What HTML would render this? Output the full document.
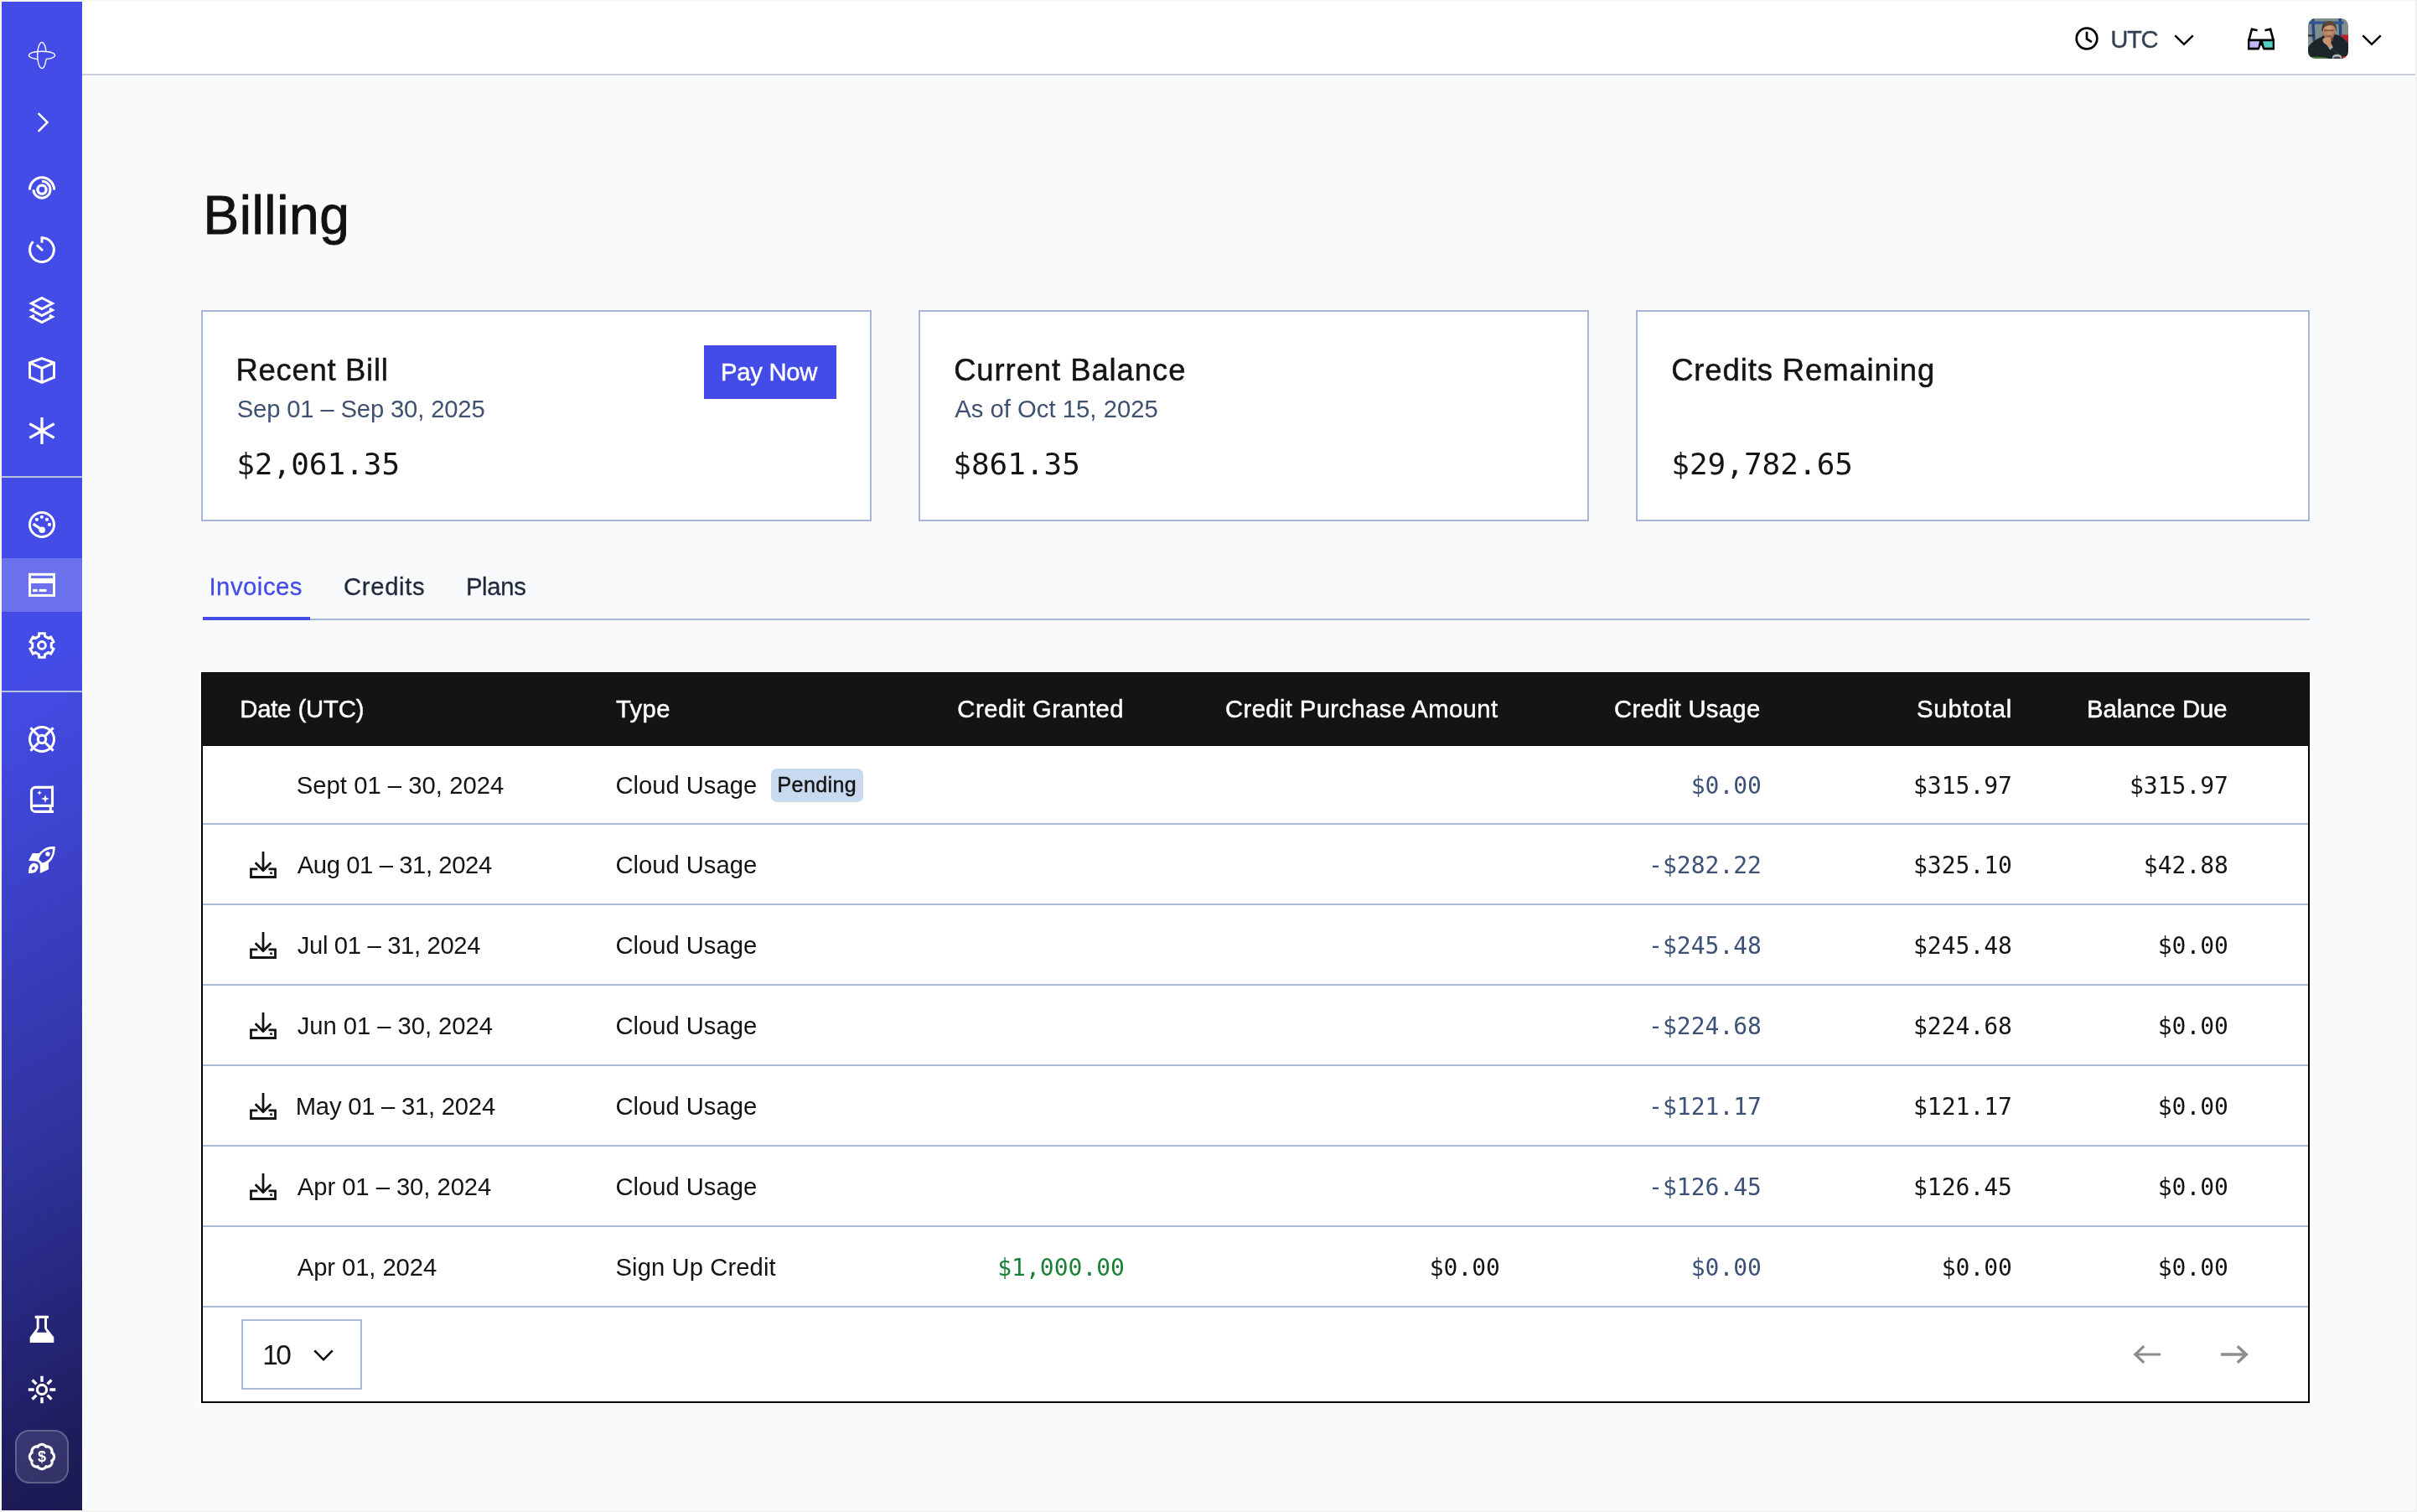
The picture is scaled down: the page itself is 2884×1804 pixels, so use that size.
<!DOCTYPE html>
<html lang="en"><head><meta charset="utf-8"><title>Billing</title>
<style>
*{box-sizing:border-box;margin:0;padding:0}
html,body{width:2884px;height:1804px;overflow:hidden;background:#f2f2f2}
body{position:relative;font-family:"Liberation Sans", sans-serif;-webkit-font-smoothing:antialiased}
#root{position:absolute;left:0;top:0;width:2884px;height:1804px;overflow:hidden;will-change:transform}
#app{position:absolute;left:2px;top:2px;width:2880px;height:1800px;background:#f8fafc}
.abs,.t,.ic{position:absolute}
.t{white-space:nowrap;line-height:1;display:block;font-weight:400}
.s{font-family:"Liberation Sans", sans-serif}
.m{font-family:"DejaVu Sans Mono", "Liberation Mono", monospace}
.ic{display:block}
nav{position:absolute;left:2px;top:2px;width:96px;height:1800px;background:linear-gradient(150deg,#444ce7 0%,#444ce7 44%,#3c41c8 58%,#3134a0 74%,#25267a 86%,#1d1c58 96%,#1b1a52 100%)}
nav .div{position:absolute;left:0;width:96px;height:2px;background:#b4c3dc}
nav .act{position:absolute;left:0;top:664px;width:96px;height:64px;background:rgba(255,255,255,.21)}
nav .bill{position:absolute;left:16px;top:1704px;width:64px;height:64px;border-radius:17px;background:rgba(255,255,255,.11);border:2px solid rgba(255,255,255,.22)}
.hbar{position:absolute;left:98px;top:2px;width:2784px;height:88px;background:#fff;border-bottom:2px solid #cbd0da}
.card{position:absolute;top:370px;height:252px;background:#fff;border:2px solid #a6b8d6}
.btn{position:absolute;left:840px;top:412px;width:158px;height:64px;background:#444ce7}
.tabline{position:absolute;left:242px;top:738px;width:2514px;height:2px;background:#a6b8d6}
.tabact{position:absolute;left:242px;top:736px;width:128px;height:4px;background:#444ce7}
.tbl{position:absolute;left:240px;top:802px;width:2516px;height:872px;background:#fff;border:2px solid #000;box-shadow:0 0 0 1px #fff}
.thead{position:absolute;left:241px;top:802px;width:2514px;height:88px;background:#141414;border-top:1px solid #000;border-bottom:1px solid #000}
.rl{position:absolute;left:242px;width:2512px;height:2px;background:#a6b8d6}
.badge{position:absolute;left:920px;top:917px;width:110px;height:40px;border-radius:7px;background:#c9d9f0}
.sel{position:absolute;left:288px;top:1574px;width:144px;height:84px;border:2px solid #a6b8d6;background:#fff}
</style></head>
<body>
<div id="root">
<div class="abs" style="left:1px;top:1px;width:2881px;height:1px;background:#fdfdf1"></div>
<div class="abs" style="left:1px;top:1px;width:1px;height:1801px;background:#fdfdf1"></div>
<div id="app"></div>
<nav aria-label="Primary">
<div class="act"></div>
<div class="div" style="top:566px"></div>
<div class="div" style="top:822px"></div>
<div class="bill"></div>
<svg class="ic" style="left:32px;top:48px" width="32" height="32" viewBox="0 0 32 32" overflow="visible"><path d="M20.9 20.45A15.6 4.7 0 1 0 11.1 20.45" fill="none" stroke="#fff" stroke-width="1.4"/><path d="M20.9 11.2A5.2 15.5 0 1 0 20.9 20.8" fill="none" stroke="#fff" stroke-width="1.4"/></svg>
<svg class="ic" style="left:32px;top:128px" width="32" height="32" viewBox="0 0 32 32" overflow="visible"><path d="M11.65 5.05 22.6 16 11.65 26.95" fill="none" stroke="#fff" stroke-width="2.5"/></svg>
<svg class="ic" style="left:32px;top:208px" width="32" height="32" viewBox="0 0 32 32" overflow="visible"><path d="M1.4 16.4A14.6 14.6 0 0 1 30.6 16.4" fill="none" stroke="#fff" stroke-width="3"/><path d="M16 6.2A10 10 0 1 1 6 16.2" fill="none" stroke="#fff" stroke-width="3"/><circle cx="16" cy="16.2" r="5.1" fill="none" stroke="#fff" stroke-width="3.3"/></svg>
<svg class="ic" style="left:32px;top:280px" width="32" height="32" viewBox="0 0 32 32" overflow="visible"><path d="M16 1.7A14.4 14.4 0 1 1 5.5 6.2" fill="none" stroke="#fff" stroke-width="3"/><path d="M16 0.3V7.7" fill="none" stroke="#fff" stroke-width="3"/><path d="M9.9 10.3 17 17" fill="none" stroke="#fff" stroke-width="3"/></svg>
<svg class="ic" style="left:32px;top:352px" width="32" height="32" viewBox="0 0 32 32" overflow="visible"><path d="M16 1.5 28.5 8 16 14.5 3.5 8Z" fill="none" stroke="#fff" stroke-width="3"/><path d="M7 14.2 3.5 16 16 22.5 28.5 16 25 14.2" fill="none" stroke="#fff" stroke-width="3"/><path d="M7 22.2 3.5 24 16 30.5 28.5 24 25 22.2" fill="none" stroke="#fff" stroke-width="3"/></svg>
<svg class="ic" style="left:32px;top:424px" width="32" height="32" viewBox="0 0 32 32" overflow="visible"><path d="M16 1.6 30.5 6.8V24.2L16 30.4 1.5 24.2V6.8Z" fill="none" stroke="#fff" stroke-width="3"/><path d="M1.5 6.8 16 13.4 30.5 6.8M16 13.4V30.4" fill="none" stroke="#fff" stroke-width="3"/></svg>
<svg class="ic" style="left:32px;top:496px" width="32" height="32" viewBox="0 0 32 32" overflow="visible"><path d="M16 0V32" fill="none" stroke="#fff" stroke-width="3.3"/><path d="M1.3 7.6 30.7 24.4M1.3 24.4 30.7 7.6" fill="none" stroke="#fff" stroke-width="3.3"/></svg>
<svg class="ic" style="left:32px;top:608px" width="32" height="32" viewBox="0 0 32 32" overflow="visible"><circle cx="16" cy="16" r="14.5" fill="none" stroke="#fff" stroke-width="3"/><circle cx="9.9" cy="9.8" r="2.1" fill="#fff"/><circle cx="15.9" cy="6.8" r="2.1" fill="#fff"/><circle cx="22" cy="9.8" r="2.1" fill="#fff"/><circle cx="25" cy="15.9" r="2.1" fill="#fff"/><path d="M5.6 15.1 16 22" fill="none" stroke="#fff" stroke-width="3.2"/><circle cx="16.2" cy="22.2" r="3.8" fill="#fff"/></svg>
<svg class="ic" style="left:32px;top:680px" width="32" height="32" viewBox="0 0 32 32" overflow="visible"><rect x="1.5" y="3.3" width="29" height="25.2" fill="none" stroke="#fff" stroke-width="3"/><rect x="1.5" y="8" width="29" height="6" fill="#fff"/><rect x="5.2" y="20.9" width="5.4" height="3.1" fill="#fff"/><rect x="12.6" y="20.9" width="8.9" height="3.1" fill="#fff"/></svg>
<svg class="ic" style="left:32px;top:752px" width="32" height="32" viewBox="0 0 32 32" overflow="visible"><path d="M19.55 5.06 19.28 1.77 12.72 1.77 12.45 5.06 8.30 7.45 5.32 6.04 2.04 11.73 4.75 13.61 4.75 18.39 2.04 20.27 5.32 25.96 8.30 24.55 12.45 26.94 12.72 30.23 19.28 30.23 19.55 26.94 23.70 24.55 26.68 25.96 29.96 20.27 27.25 18.39 27.25 13.61 29.96 11.73 26.68 6.04 23.70 7.45Z" fill="none" stroke="#fff" stroke-width="3" stroke-linejoin="miter"/><circle cx="16" cy="15.9" r="4.45" fill="none" stroke="#fff" stroke-width="2.9"/></svg>
<svg class="ic" style="left:32px;top:864px" width="32" height="32" viewBox="0 0 32 32" overflow="visible"><circle cx="16" cy="16" r="14.5" fill="none" stroke="#fff" stroke-width="3"/><circle cx="16" cy="16" r="4.7" fill="none" stroke="#fff" stroke-width="3.1"/><path d="M20.38 20.38 29.58 29.58M11.62 20.38 2.42 29.58M11.62 11.62 2.42 2.42M20.38 11.62 29.58 2.42" fill="none" stroke="#fff" stroke-width="3"/></svg>
<svg class="ic" style="left:32px;top:936px" width="32" height="32" viewBox="0 0 32 32" overflow="visible"><path d="M30 1.4H8.2A4.7 4.7 0 0 0 3.5 6.1V25.7A4.7 4.7 0 0 0 8.2 30.4H30" fill="none" stroke="#fff" stroke-width="3.1"/><path d="M28.5 -0.2V25M3.5 23.4H30M26.3 24V30" fill="none" stroke="#fff" stroke-width="3.1"/><path d="M13.10 5.00 13.96 7.04 16.00 7.90 13.96 8.76 13.10 10.80 12.24 8.76 10.20 7.90 12.24 7.04Z" fill="#fff"/><path d="M20.00 10.20 21.25 13.85 24.90 15.10 21.25 16.35 20.00 20.00 18.75 16.35 15.10 15.10 18.75 13.85Z" fill="#fff"/></svg>
<svg class="ic" style="left:32px;top:1008px" width="32" height="32" viewBox="0 0 32 32" overflow="visible"><path d="M31.8 -0.1C28 -0.2 24 0.2 21 1.5 18 3 15 5.5 12.6 8L4.75 8 0.1 17 8.5 17.4C11 17.6 13 19.5 13.8 21.7L13.8 31.9 24 27.2 24 19.4C28 16.5 31.9 10 31.8 -0.1ZM28.8 3.1C25 3.2 20 4.8 17 7.3 15 9 13.2 12.5 12.4 15.4L16.6 19.6C20 18.6 23.5 16.5 25.6 14 27.8 11.2 29 7.5 28.8 3.1Z" fill="#fff" fill-rule="evenodd"/><circle cx="23" cy="8.9" r="2.7" fill="#fff"/><path d="M-0.1 31.9 0.6 25.5C1.4 22.2 3.8 20.2 6.4 19.8 9 20 11 21.4 11.6 23 11.8 26 10.6 28.6 8.5 30.2 7 31.3 5 31.8 -0.1 31.9ZM3.8 27.7C3.8 26.3 4.1 25.4 4.5 24.9 5.2 24.2 6 24 6.6 24 7.4 24.5 7.8 25.2 7.8 25.8 7.6 26.8 7 27.4 6.4 27.7Z" fill="#fff" fill-rule="evenodd"/></svg>
<svg class="ic" style="left:32px;top:1568px" width="32" height="32" viewBox="0 0 32 32" overflow="visible"><path d="M7.7 -0.2H24V3H22V14.7L30.3 25.6V32H1.7V25.6L9.7 14.7V3H7.7ZM12.6 3H19V14.7L22 19.7H9.7L12.6 14.7Z" fill="#fff" fill-rule="evenodd"/></svg>
<svg class="ic" style="left:32px;top:1640px" width="32" height="32" viewBox="0 0 32 32" overflow="visible"><circle cx="16" cy="16" r="5.6" fill="none" stroke="#fff" stroke-width="3.2"/><path d="M25.30 16.00 32.20 16.00M22.58 22.58 27.46 27.46M16.00 25.30 16.00 32.20M9.42 22.58 4.54 27.46M6.70 16.00 -0.20 16.00M9.42 9.42 4.54 4.54M16.00 6.70 16.00 -0.20M22.58 9.42 27.46 4.54" fill="none" stroke="#fff" stroke-width="3.4"/></svg>
<svg class="ic" style="left:32px;top:1720px" width="32" height="32" viewBox="0 0 32 32" overflow="visible"><path d="M30.60 16.00 30.59 16.38 30.55 16.76 30.49 17.14 30.40 17.51 30.29 17.88 30.16 18.24 30.00 18.60 29.83 18.94 29.62 19.27 29.40 19.59 29.15 19.89 28.87 20.18 28.57 20.45 28.22 20.69 27.73 20.86 27.96 21.32 28.03 21.74 28.06 22.14 28.05 22.54 28.01 22.93 27.95 23.32 27.85 23.70 27.74 24.07 27.60 24.43 27.44 24.78 27.26 25.11 27.05 25.44 26.83 25.75 26.59 26.04 26.32 26.32 26.04 26.59 25.75 26.83 25.44 27.05 25.11 27.26 24.78 27.44 24.43 27.60 24.07 27.74 23.70 27.85 23.32 27.95 22.93 28.01 22.54 28.05 22.14 28.06 21.74 28.03 21.32 27.96 20.86 27.73 20.69 28.22 20.45 28.57 20.18 28.87 19.89 29.15 19.59 29.40 19.27 29.62 18.94 29.83 18.60 30.00 18.24 30.16 17.88 30.29 17.51 30.40 17.14 30.49 16.76 30.55 16.38 30.59 16.00 30.60 15.62 30.59 15.24 30.55 14.86 30.49 14.49 30.40 14.12 30.29 13.76 30.16 13.40 30.00 13.06 29.83 12.73 29.62 12.41 29.40 12.11 29.15 11.82 28.87 11.55 28.57 11.31 28.22 11.14 27.73 10.68 27.96 10.26 28.03 9.86 28.06 9.46 28.05 9.07 28.01 8.68 27.95 8.30 27.85 7.93 27.74 7.57 27.60 7.22 27.44 6.89 27.26 6.56 27.05 6.25 26.83 5.96 26.59 5.68 26.32 5.41 26.04 5.17 25.75 4.95 25.44 4.74 25.11 4.56 24.78 4.40 24.43 4.26 24.07 4.15 23.70 4.05 23.32 3.99 22.93 3.95 22.54 3.94 22.14 3.97 21.74 4.04 21.32 4.27 20.86 3.78 20.69 3.43 20.45 3.13 20.18 2.85 19.89 2.60 19.59 2.38 19.27 2.17 18.94 2.00 18.60 1.84 18.24 1.71 17.88 1.60 17.51 1.51 17.14 1.45 16.76 1.41 16.38 1.40 16.00 1.41 15.62 1.45 15.24 1.51 14.86 1.60 14.49 1.71 14.12 1.84 13.76 2.00 13.40 2.17 13.06 2.38 12.73 2.60 12.41 2.85 12.11 3.13 11.82 3.43 11.55 3.78 11.31 4.27 11.14 4.04 10.68 3.97 10.26 3.94 9.86 3.95 9.46 3.99 9.07 4.05 8.68 4.15 8.30 4.26 7.93 4.40 7.57 4.56 7.22 4.74 6.89 4.95 6.56 5.17 6.25 5.41 5.96 5.68 5.68 5.96 5.41 6.25 5.17 6.56 4.95 6.89 4.74 7.22 4.56 7.57 4.40 7.93 4.26 8.30 4.15 8.68 4.05 9.07 3.99 9.46 3.95 9.86 3.94 10.26 3.97 10.68 4.04 11.14 4.27 11.31 3.78 11.55 3.43 11.82 3.13 12.11 2.85 12.41 2.60 12.73 2.38 13.06 2.17 13.40 2.00 13.76 1.84 14.12 1.71 14.49 1.60 14.86 1.51 15.24 1.45 15.62 1.41 16.00 1.40 16.38 1.41 16.76 1.45 17.14 1.51 17.51 1.60 17.88 1.71 18.24 1.84 18.60 2.00 18.94 2.17 19.27 2.38 19.59 2.60 19.89 2.85 20.18 3.13 20.45 3.43 20.69 3.78 20.86 4.27 21.32 4.04 21.74 3.97 22.14 3.94 22.54 3.95 22.93 3.99 23.32 4.05 23.70 4.15 24.07 4.26 24.43 4.40 24.78 4.56 25.11 4.74 25.44 4.95 25.75 5.17 26.04 5.41 26.32 5.68 26.59 5.96 26.83 6.25 27.05 6.56 27.26 6.89 27.44 7.22 27.60 7.57 27.74 7.93 27.85 8.30 27.95 8.68 28.01 9.07 28.05 9.46 28.06 9.86 28.03 10.26 27.96 10.68 27.73 11.14 28.22 11.31 28.57 11.55 28.87 11.82 29.15 12.11 29.40 12.41 29.62 12.73 29.83 13.06 30.00 13.40 30.16 13.76 30.29 14.12 30.40 14.49 30.49 14.86 30.55 15.24 30.59 15.62Z" fill="none" stroke="#fff" stroke-width="3.2" stroke-linejoin="round"/><text x="16" y="22.4" text-anchor="middle" font-family="Liberation Sans, sans-serif" font-weight="700" font-size="18" fill="#fff">$</text></svg>

</nav>
<div class="abs" style="left:98px;top:2px;width:1px;height:1800px;background:#fff"></div>
<header>
<div class="hbar"></div>
<svg class="ic" style="left:2474px;top:30px" width="32" height="32" viewBox="0 0 32 32" ><circle cx="16" cy="16" r="12.3" fill="none" stroke="#000" stroke-width="2.7"/><path d="M16 7.7V16.5L21.9 20.1" fill="none" stroke="#000" stroke-width="2.7"/></svg>
<span class="t s" id="utc" style="left:2518.13px;top:33.22px;font-size:29.26px;color:#334155;letter-spacing:-1.250px;-webkit-text-stroke:0.3px #334155;">UTC</span>
<svg class="ic" style="left:2594px;top:41px" width="24" height="14" viewBox="0 0 24 14" overflow="visible"><path d="M1.3 1.3 12 11.8 22.7 1.3" fill="none" stroke="#000" stroke-width="2.5"/></svg>
<svg class="ic" style="left:2682px;top:33px" width="32" height="28" viewBox="0 0 32 28" overflow="visible"><path d="M1.5 14.6 4.9 1.8 11.6 3.3M30.5 14.6 27.1 1.8 20.4 3.3" fill="none" stroke="#000" stroke-width="2.6"/><path d="M1.2 14.6H30.8V25.3H19.4L16 17.2 12.6 25.3H1.2Z" fill="#000" stroke="#000" stroke-width="2.4"/><path d="M2.4 16.3H14L12.3 23.75H2.4Z" fill="#c4b5fd"/><path d="M18.1 16.3H29.7V23.75H20Z" fill="#4fd1c5"/></svg>
<svg class="ic" style="left:2754px;top:22px" width="48" height="48" viewBox="0 0 48 48" role="img" aria-label="User avatar"><defs><clipPath id="avc"><rect width="48" height="48" rx="8.5" ry="8.5"/></clipPath><filter id="avb" x="-10%" y="-10%" width="120%" height="120%"><feGaussianBlur stdDeviation="0.55"/></filter><radialGradient id="avf" cx="0.5" cy="0.3" r="0.75"><stop offset="0" stop-color="#d9a684"/><stop offset="0.6" stop-color="#b98462"/><stop offset="1" stop-color="#8a5e45"/></radialGradient></defs><g clip-path="url(#avc)"><g filter="url(#avb)"><rect x="-2" y="-2" width="52" height="52" fill="#7f8d8f"/><rect x="-2" y="24" width="12" height="12" fill="#8a9798"/><path d="M4 -1H7.4L8.8 27H5.4Z" fill="#27477f"/><path d="M36.4 -1H39.8L40.4 21H37Z" fill="#26457c"/><path d="M1.2 3.4H42.6V6.8H1.2Z" fill="#2f5796"/><path d="M-1 19.4H8V21.6H-1Z" fill="#2a3034"/><path d="M39 19.6H49V31H41Z" fill="#b5232d"/><path d="M-1 49V36C3 29 9 25 16 22L20 19 30 18.4 36 20C42 22.4 46 27 49 31V49Z" fill="#1d252a"/><path d="M19 18H31L30 27 22 28Z" fill="#5b3f30"/><ellipse cx="24.8" cy="15.6" rx="7.6" ry="9.2" fill="url(#avf)"/><path d="M19 13.2H30.6V15.4H19Z" fill="#6b4734" opacity=".7"/><path d="M21.6 20.4H28V22H21.6Z" fill="#7a4d3c" opacity=".6"/><path d="M16.8 15.5C15.6 7 19.6 3 25.4 3 31.4 3 35.2 7 33.6 16 33 11.4 31.4 8.8 29 8.2 26 7.6 22.6 8.6 20 10.2 18.2 11.6 17.4 13 16.8 15.5Z" fill="#5a4735"/><path d="M16.8 15.5C16.4 11 17.6 7.6 20 5.6 18.6 8.6 18 11.6 17.8 15Z" fill="#3a2e24"/><path d="M17.4 25.6C17.6 23.6 20 22.8 23.4 22.6 26 22.6 27.4 23.6 27.6 25.6L27.4 29.4 29.6 33.8 26 36.6 22 31.4C19.4 30.4 17.4 28.4 17.4 25.6Z" fill="#c9946f"/><path d="M24.6 35.6 28.4 32.6 29.8 34.8 26.2 37.6Z" fill="#a9aaab"/><path d="M27 37C32 39 37 42 40 46" fill="none" stroke="#2b363d" stroke-width="1.2"/><path d="M-1 46.4C8 45.2 18 46 24 47.2V49H-1Z" fill="#4f7a40"/><ellipse cx="34.6" cy="46.4" rx="5.6" ry="3.6" fill="#b4b8ba"/><ellipse cx="34.6" cy="47.6" rx="4.2" ry="2.2" fill="#3a3f42"/><path d="M41 45H46V49H41Z" fill="#b5232d"/></g></g></svg>
<svg class="ic" style="left:2818px;top:41px" width="24" height="14" viewBox="0 0 24 14" overflow="visible"><path d="M1.3 1.3 12 11.8 22.7 1.3" fill="none" stroke="#000" stroke-width="2.5"/></svg>
</header>
<main>
<h1 class="t s" id="title" style="left:242.44px;top:225.30px;font-size:64.00px;color:#121212;letter-spacing:0.601px;-webkit-text-stroke:0.9px #121212;">Billing</h1>
<section class="cards">
<article>
<div class="card" style="left:240px;width:800px"></div>
<h2 class="t s" id="c1t" style="left:281.51px;top:424.24px;font-size:36.43px;color:#141414;letter-spacing:0.720px;-webkit-text-stroke:0.5px #141414;">Recent Bill</h2>
<p class="t s" id="c1s" style="left:282.76px;top:473.81px;font-size:29.26px;color:#3f5170;letter-spacing:-0.165px;">Sep 01 – Sep 30, 2025</p>
<p class="t m" id="c1a" style="left:282.14px;top:535.52px;font-size:36.00px;color:#141414;">$2,061.35</p>
<div class="btn" role="button"></div>
<span class="t s" id="pay" style="left:860.06px;top:429.90px;font-size:29.26px;color:#ffffff;letter-spacing:-0.267px;-webkit-text-stroke:0.4px #ffffff;">Pay Now</span>
</article>
<article>
<div class="card" style="left:1096px;width:800px"></div>
<h2 class="t s" id="c2t" style="left:1138.13px;top:423.94px;font-size:36.43px;color:#141414;letter-spacing:0.934px;-webkit-text-stroke:0.5px #141414;">Current Balance</h2>
<p class="t s" id="c2s" style="left:1139.13px;top:473.81px;font-size:29.26px;color:#3f5170;letter-spacing:0.025px;">As of Oct 15, 2025</p>
<p class="t m" id="c2a" style="left:1137.25px;top:535.93px;font-size:36.00px;color:#141414;">$861.35</p>
</article>
<article>
<div class="card" style="left:1952px;width:804px"></div>
<h2 class="t s" id="c3t" style="left:1994.13px;top:423.92px;font-size:36.43px;color:#141414;letter-spacing:0.905px;-webkit-text-stroke:0.5px #141414;">Credits Remaining</h2>
<p class="t m" id="c3a" style="left:1994.25px;top:535.93px;font-size:36.00px;color:#141414;">$29,782.65</p>
</article>
</section>
<div class="tabs" role="tablist">
<div class="tabline"></div><div class="tabact"></div>
<div class="t s" id="tab1" role="tab" aria-selected="true" style="left:249.47px;top:685.70px;font-size:29.26px;color:#444ce7;letter-spacing:0.528px;-webkit-text-stroke:0.3px #444ce7;">Invoices</div>
<div class="t s" id="tab2" role="tab" style="left:410.00px;top:685.72px;font-size:29.26px;color:#1e293b;letter-spacing:0.667px;-webkit-text-stroke:0.3px #1e293b;">Credits</div>
<div class="t s" id="tab3" role="tab" style="left:555.90px;top:685.72px;font-size:29.26px;color:#1e293b;letter-spacing:-0.300px;-webkit-text-stroke:0.3px #1e293b;">Plans</div>
</div>
<div class="table" role="table">
<div class="tbl"></div>
<div class="tr" role="row">
<div class="thead"></div>
<div class="t s" id="h1" role="columnheader" style="left:286.18px;top:831.60px;font-size:29.26px;color:#ffffff;letter-spacing:-0.132px;-webkit-text-stroke:0.45px #ffffff;">Date (UTC)</div>
<div class="t s" id="h2" role="columnheader" style="left:735.00px;top:831.60px;font-size:29.26px;color:#ffffff;letter-spacing:0.333px;-webkit-text-stroke:0.45px #ffffff;">Type</div>
<div class="t s" id="h3" role="columnheader" style="left:1142.35px;top:831.61px;font-size:29.26px;color:#ffffff;letter-spacing:0.490px;-webkit-text-stroke:0.45px #ffffff;">Credit Granted</div>
<div class="t s" id="h4" role="columnheader" style="left:1462.00px;top:831.60px;font-size:29.26px;color:#ffffff;letter-spacing:0.381px;-webkit-text-stroke:0.45px #ffffff;">Credit Purchase Amount</div>
<div class="t s" id="h5" role="columnheader" style="left:1926.00px;top:831.61px;font-size:29.26px;color:#ffffff;letter-spacing:0.318px;-webkit-text-stroke:0.45px #ffffff;">Credit Usage</div>
<div class="t s" id="h6" role="columnheader" style="left:2287.00px;top:831.60px;font-size:29.26px;color:#ffffff;letter-spacing:0.857px;-webkit-text-stroke:0.45px #ffffff;">Subtotal</div>
<div class="t s" id="h7" role="columnheader" style="left:2490.00px;top:831.61px;font-size:29.26px;color:#ffffff;letter-spacing:0.010px;-webkit-text-stroke:0.45px #ffffff;">Balance Due</div>
</div>
<div class="tr" role="row">
<div class="rl" style="top:982px"></div>
<div class="t s" id="r0d" role="cell" style="left:353.76px;top:923.22px;font-size:29.26px;color:#141414;letter-spacing:0.017px;">Sept 01 – 30, 2024</div>
<div class="t s" id="r0t" role="cell" style="left:734.56px;top:923.02px;font-size:29.26px;color:#141414;letter-spacing:-0.050px;">Cloud Usage</div>
<div class="badge"></div><span class="t s" id="pend" style="left:927.56px;top:924.13px;font-size:25.08px;color:#141414;letter-spacing:0.349px;-webkit-text-stroke:0.45px #141414;">Pending</span>
<div class="t m" id="r0u" role="cell" style="left:2017.69px;top:924.30px;font-size:28.00px;color:#3d5176;">$0.00</div>
<div class="t m" id="r0s" role="cell" style="left:2282.97px;top:924.30px;font-size:28.00px;color:#141414;">$315.97</div>
<div class="t m" id="r0b" role="cell" style="left:2540.97px;top:924.30px;font-size:28.00px;color:#141414;">$315.97</div>
</div>
<div class="tr" role="row">
<div class="rl" style="top:1078px"></div>
<svg class="ic" style="left:298px;top:1016px" width="32" height="32" viewBox="0 0 32 32" overflow="visible" role="img" aria-label="Download invoice"><path d="M16 0V22.6" fill="none" stroke="#141414" stroke-width="2.8"/><path d="M6.7 13.3 16 22.6 25.3 13.3" fill="none" stroke="#141414" stroke-width="2.8"/><path d="M9.3 20.9H1.5V30.5H30.5V20.9H22.5" fill="none" stroke="#141414" stroke-width="2.8"/><rect x="24.2" y="24.4" width="2.6" height="2.6" fill="#141414"/></svg>
<div class="t s" id="r1d" role="cell" style="left:354.76px;top:1018.22px;font-size:29.26px;color:#141414;letter-spacing:-0.418px;">Aug 01 – 31, 2024</div>
<div class="t s" id="r1t" role="cell" style="left:734.56px;top:1018.02px;font-size:29.26px;color:#141414;letter-spacing:-0.050px;">Cloud Usage</div>
<div class="t m" id="r1u" role="cell" style="left:1967.11px;top:1019.30px;font-size:28.00px;color:#3d5176;">-$282.22</div>
<div class="t m" id="r1s" role="cell" style="left:2282.97px;top:1019.30px;font-size:28.00px;color:#141414;">$325.10</div>
<div class="t m" id="r1b" role="cell" style="left:2557.83px;top:1019.30px;font-size:28.00px;color:#141414;">$42.88</div>
</div>
<div class="tr" role="row">
<div class="rl" style="top:1174px"></div>
<svg class="ic" style="left:298px;top:1112px" width="32" height="32" viewBox="0 0 32 32" overflow="visible" role="img" aria-label="Download invoice"><path d="M16 0V22.6" fill="none" stroke="#141414" stroke-width="2.8"/><path d="M6.7 13.3 16 22.6 25.3 13.3" fill="none" stroke="#141414" stroke-width="2.8"/><path d="M9.3 20.9H1.5V30.5H30.5V20.9H22.5" fill="none" stroke="#141414" stroke-width="2.8"/><rect x="24.2" y="24.4" width="2.6" height="2.6" fill="#141414"/></svg>
<div class="t s" id="r2d" role="cell" style="left:354.76px;top:1114.22px;font-size:29.26px;color:#141414;letter-spacing:-0.355px;">Jul 01 – 31, 2024</div>
<div class="t s" id="r2t" role="cell" style="left:734.56px;top:1114.02px;font-size:29.26px;color:#141414;letter-spacing:-0.050px;">Cloud Usage</div>
<div class="t m" id="r2u" role="cell" style="left:1967.11px;top:1115.30px;font-size:28.00px;color:#3d5176;">-$245.48</div>
<div class="t m" id="r2s" role="cell" style="left:2282.97px;top:1115.30px;font-size:28.00px;color:#141414;">$245.48</div>
<div class="t m" id="r2b" role="cell" style="left:2574.69px;top:1115.30px;font-size:28.00px;color:#141414;">$0.00</div>
</div>
<div class="tr" role="row">
<div class="rl" style="top:1270px"></div>
<svg class="ic" style="left:298px;top:1208px" width="32" height="32" viewBox="0 0 32 32" overflow="visible" role="img" aria-label="Download invoice"><path d="M16 0V22.6" fill="none" stroke="#141414" stroke-width="2.8"/><path d="M6.7 13.3 16 22.6 25.3 13.3" fill="none" stroke="#141414" stroke-width="2.8"/><path d="M9.3 20.9H1.5V30.5H30.5V20.9H22.5" fill="none" stroke="#141414" stroke-width="2.8"/><rect x="24.2" y="24.4" width="2.6" height="2.6" fill="#141414"/></svg>
<div class="t s" id="r3d" role="cell" style="left:354.76px;top:1210.22px;font-size:29.26px;color:#141414;letter-spacing:-0.062px;">Jun 01 – 30, 2024</div>
<div class="t s" id="r3t" role="cell" style="left:734.56px;top:1210.02px;font-size:29.26px;color:#141414;letter-spacing:-0.050px;">Cloud Usage</div>
<div class="t m" id="r3u" role="cell" style="left:1967.11px;top:1211.30px;font-size:28.00px;color:#3d5176;">-$224.68</div>
<div class="t m" id="r3s" role="cell" style="left:2282.97px;top:1211.30px;font-size:28.00px;color:#141414;">$224.68</div>
<div class="t m" id="r3b" role="cell" style="left:2574.69px;top:1211.30px;font-size:28.00px;color:#141414;">$0.00</div>
</div>
<div class="tr" role="row">
<div class="rl" style="top:1366px"></div>
<svg class="ic" style="left:298px;top:1304px" width="32" height="32" viewBox="0 0 32 32" overflow="visible" role="img" aria-label="Download invoice"><path d="M16 0V22.6" fill="none" stroke="#141414" stroke-width="2.8"/><path d="M6.7 13.3 16 22.6 25.3 13.3" fill="none" stroke="#141414" stroke-width="2.8"/><path d="M9.3 20.9H1.5V30.5H30.5V20.9H22.5" fill="none" stroke="#141414" stroke-width="2.8"/><rect x="24.2" y="24.4" width="2.6" height="2.6" fill="#141414"/></svg>
<div class="t s" id="r4d" role="cell" style="left:352.76px;top:1306.22px;font-size:29.26px;color:#141414;letter-spacing:-0.244px;">May 01 – 31, 2024</div>
<div class="t s" id="r4t" role="cell" style="left:734.56px;top:1306.02px;font-size:29.26px;color:#141414;letter-spacing:-0.050px;">Cloud Usage</div>
<div class="t m" id="r4u" role="cell" style="left:1967.11px;top:1307.30px;font-size:28.00px;color:#3d5176;">-$121.17</div>
<div class="t m" id="r4s" role="cell" style="left:2282.97px;top:1307.30px;font-size:28.00px;color:#141414;">$121.17</div>
<div class="t m" id="r4b" role="cell" style="left:2574.69px;top:1307.30px;font-size:28.00px;color:#141414;">$0.00</div>
</div>
<div class="tr" role="row">
<div class="rl" style="top:1462px"></div>
<svg class="ic" style="left:298px;top:1400px" width="32" height="32" viewBox="0 0 32 32" overflow="visible" role="img" aria-label="Download invoice"><path d="M16 0V22.6" fill="none" stroke="#141414" stroke-width="2.8"/><path d="M6.7 13.3 16 22.6 25.3 13.3" fill="none" stroke="#141414" stroke-width="2.8"/><path d="M9.3 20.9H1.5V30.5H30.5V20.9H22.5" fill="none" stroke="#141414" stroke-width="2.8"/><rect x="24.2" y="24.4" width="2.6" height="2.6" fill="#141414"/></svg>
<div class="t s" id="r5d" role="cell" style="left:354.76px;top:1402.22px;font-size:29.26px;color:#141414;letter-spacing:-0.061px;">Apr 01 – 30, 2024</div>
<div class="t s" id="r5t" role="cell" style="left:734.56px;top:1402.02px;font-size:29.26px;color:#141414;letter-spacing:-0.050px;">Cloud Usage</div>
<div class="t m" id="r5u" role="cell" style="left:1967.11px;top:1403.30px;font-size:28.00px;color:#3d5176;">-$126.45</div>
<div class="t m" id="r5s" role="cell" style="left:2282.97px;top:1403.30px;font-size:28.00px;color:#141414;">$126.45</div>
<div class="t m" id="r5b" role="cell" style="left:2574.69px;top:1403.30px;font-size:28.00px;color:#141414;">$0.00</div>
</div>
<div class="tr" role="row">
<div class="rl" style="top:1558px"></div>
<div class="t s" id="r6d" role="cell" style="left:354.76px;top:1498.22px;font-size:29.26px;color:#141414;letter-spacing:-0.098px;">Apr 01, 2024</div>
<div class="t s" id="r6t" role="cell" style="left:734.56px;top:1498.02px;font-size:29.26px;color:#141414;letter-spacing:0.063px;">Sign Up Credit</div>
<div class="t m" id="r6g" role="cell" style="left:1190.25px;top:1499.30px;font-size:28.00px;color:#1a7f37;">$1,000.00</div>
<div class="t m" id="r6p" role="cell" style="left:1705.69px;top:1499.30px;font-size:28.00px;color:#141414;">$0.00</div>
<div class="t m" id="r6u" role="cell" style="left:2017.69px;top:1499.30px;font-size:28.00px;color:#3d5176;">$0.00</div>
<div class="t m" id="r6s" role="cell" style="left:2316.69px;top:1499.30px;font-size:28.00px;color:#141414;">$0.00</div>
<div class="t m" id="r6b" role="cell" style="left:2574.69px;top:1499.30px;font-size:28.00px;color:#141414;">$0.00</div>
</div>
<div class="tfoot">
<div class="sel"></div>
<span class="t s" id="ten" style="left:313.36px;top:1600.37px;font-size:33.44px;color:#141414;letter-spacing:-2.600px;">10</span>
<svg class="ic" style="left:374px;top:1610.4px" width="24" height="14" viewBox="0 0 24 14" overflow="visible"><path d="M1.3 1.3 12 12.3 22.7 1.3" fill="none" stroke="#000" stroke-width="2.5"/></svg>
<svg class="ic" style="left:2546px;top:1605px" width="32" height="22" viewBox="0 0 32 22" overflow="visible" role="img" aria-label="Previous page"><path d="M12.2 1.2 1.8 11 12.2 20.8M1.8 11H32" fill="none" stroke="#8c8c8c" stroke-width="3.2"/></svg>
<svg class="ic" style="left:2650px;top:1605px" width="32" height="22" viewBox="0 0 32 22" overflow="visible" role="img" aria-label="Next page"><path d="M19.8 1.2 30.2 11 19.8 20.8M30.2 11H0" fill="none" stroke="#8c8c8c" stroke-width="3.4"/></svg>
</div>
</div>
</main>
</div>
</body></html>
